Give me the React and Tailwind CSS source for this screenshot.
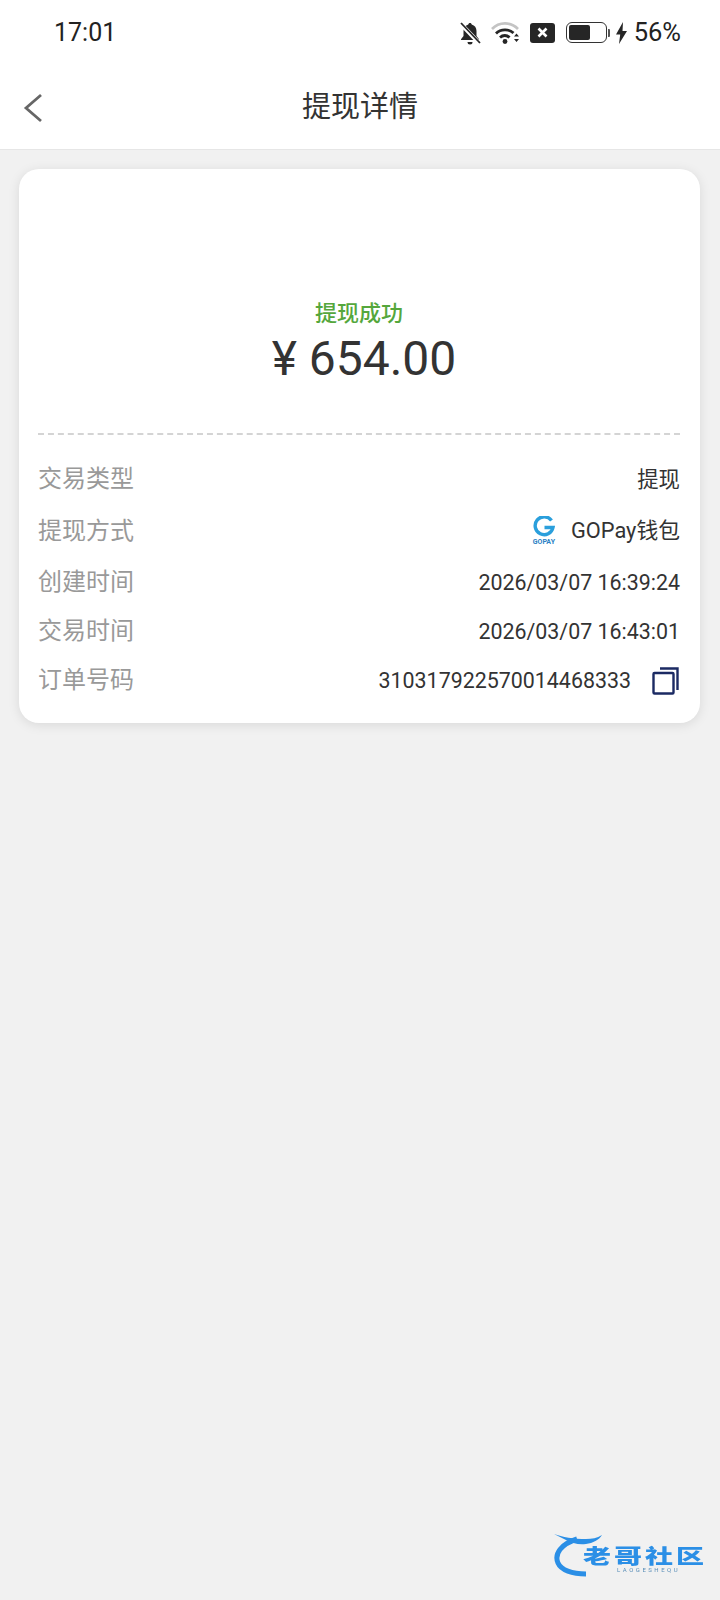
import React from 'react'

const rows = [
  { label: '交易类型', value: '提现' },
  { label: '提现方式', value: 'GOPay钱包', gopay: true },
  { label: '创建时间', value: '2026/03/07 16:39:24' },
  { label: '交易时间', value: '2026/03/07 16:43:01' },
  { label: '订单号码', value: '310317922570014468333', copy: true },
]

const rowHeights = ['h-[52px]', 'h-[52px]', 'h-[50px]', 'h-[48px]', 'h-[50px]']

function StatusBar() {
  return (
    <div className="flex h-[65px] items-center justify-between pl-[54px] pr-[39px] text-[#222]">
      <span className="text-[25px] leading-none">17:01</span>
      <div className="flex items-center">
        <svg width="22" height="24" viewBox="0 0 22 24" fill="#262626">
          <path d="M11 2c1 0 1.600.7 1.700 1.500 3 .8 4.800 3.300 4.800 6.500v5l2.500 3.200v.8H2v-.8L4.500 15v-5c0-3.200 1.800-5.700 4.800-6.500C9.400 2.700 10 2 11 2z" />
          <path d="M8.500 21h5a2.500 2.500 0 0 1-5 0z" />
          <path d="M1.500 2.500l19 20" stroke="#fff" strokeWidth="4" />
          <path d="M2 2l19 20" stroke="#262626" strokeWidth="1.800" />
        </svg>
        <svg className="ml-[10px]" width="30" height="24" viewBox="0 0 30 24" fill="none">
          <path d="M1 8C8 .5 20 .5 27 8" stroke="#c4c4c4" strokeWidth="2.600" />
          <path d="M5 12.500c4.800-4.800 13-4.800 17.500-.5" stroke="#262626" strokeWidth="2.800" />
          <path d="M9 16.500c2.800-2.700 7-2.700 9.500 0" stroke="#262626" strokeWidth="2.800" />
          <circle cx="14" cy="20.500" r="2.400" fill="#262626" />
          <path d="M23 15.500l2.500-3 2.500 3zM23 18l2.500 3 2.500-3z" fill="#262626" />
        </svg>
        <div className="ml-[9px] flex h-[20px] w-[25px] items-center justify-center rounded-[3px] bg-[#262626] text-white">
          <svg width="11" height="11" viewBox="0 0 11 11" stroke="#fff" strokeWidth="2.600">
            <path d="M1.500 1.500l8 8M9.500 1.500l-8 8" />
          </svg>
        </div>
        <div className="ml-[11px] flex h-[21px] w-[41px] items-center rounded-[6px] border-[1.5px] border-[#333] p-[2px]">
          <div className="h-full w-[21px] rounded-[2px] bg-[#262626]" />
        </div>
        <div className="ml-[1px] h-[8px] w-[2px] rounded-r-[1px] bg-[#555]" />
        <svg className="ml-[5px]" width="13" height="22" viewBox="0 0 13 22" fill="#262626">
          <path d="M8 0L1 12.500h4.200L4 22l8-13H7.500z" />
        </svg>
        <span className="ml-[6px] text-[25.500px] leading-none">56%</span>
      </div>
    </div>
  )
}

function GopayLogo() {
  return (
    <div className="flex w-[26px] flex-col items-center">
      <svg width="22" height="21" viewBox="0 0 22 21" fill="none">
        <path d="M18.500 4.500A9 9 0 1 0 20 11.500H11.500" stroke="#2a9fdc" strokeWidth="3.400" />
      </svg>
      <span className="mt-[2px] font-['Roboto',sans-serif] text-[7px] font-bold leading-none text-[#2b7fc4]">GOPAY</span>
    </div>
  )
}

function CopyIcon() {
  return (
    <svg className="ml-[21px] mr-[1px]" width="27" height="28" viewBox="0 0 27 28" fill="none" stroke="#1b2a63" strokeWidth="2.400">
      <rect x="1.500" y="6" width="20" height="20.500" rx="1" />
      <path d="M8 1.500h17.500v21.500" />
    </svg>
  )
}

function Watermark() {
  return (
    <div className="absolute left-[553px] top-[1528px] h-[50px] w-[158px] blur-[0.6px]">
      <svg className="absolute left-0 top-0" width="66" height="50" viewBox="0 0 66 50" fill="none">
        <path d="M24 11C8 16 1 26 5 35c3 7 14 11 28 11" stroke="#2b8fe6" strokeWidth="5" />
        <path d="M1 6c8 3 20 5 32 5 6 0 11-1 16-4-3 5-9 8-16 9-8 1-14-1-20-4" fill="#2b8fe6" />
      </svg>
      <span className="absolute left-[30px] top-[17px] origin-top-left scale-y-[0.72] whitespace-nowrap font-['Noto_Sans_CJK_SC',sans-serif] text-[28px] font-black leading-[28px] tracking-[3px] text-[#2b8fe6]">
        老哥社区
      </span>
      <span className="absolute left-[64px] top-[39px] whitespace-nowrap font-['Roboto',sans-serif] text-[6px] leading-none tracking-[2.500px] text-[#5b8fb8]">
        LAOGESHEQU
      </span>
    </div>
  )
}

export default function App() {
  return (
    <div className="relative h-[1600px] w-[720px] overflow-hidden bg-[#f1f1f1] font-['Roboto','Noto_Sans_CJK_SC',sans-serif]">
      <div className="border-b border-[#e6e6e6] bg-white">
        <StatusBar />
        <div className="relative flex h-[84px] items-center justify-center">
          <svg className="absolute left-[22px] top-[28px]" width="22" height="30" viewBox="0 0 22 30" fill="none" stroke="#666" strokeWidth="2.800">
            <path d="M19 2L4 15l15 13" />
          </svg>
          <span className="text-[29px] leading-none text-[#333]">提现详情</span>
        </div>
      </div>

      <div className="ml-[19px] mr-[20px] mt-[19px] h-[554px] rounded-[20px] bg-white pl-[19px] pr-[20px] shadow-[0_2px_12px_rgba(0,0,0,0.1)]">
        <div className="flex h-[214px] flex-col items-center justify-end">
          <span className="text-[22px] font-medium leading-none text-[#55a73c]">提现成功</span>
          <span className="ml-[10px] mt-[10px] text-[48px] leading-none text-[#333]">¥ 654.00</span>
        </div>
        <div className="mt-[50px] border-t-2 border-dashed border-[#d4d4d4]" />
        <div className="mt-[18px]">
          {rows.map((row, i) => (
            <div key={row.label} className={`flex items-center justify-between ${rowHeights[i]}`}>
              <span className="text-[24px] leading-none text-[#999]">{row.label}</span>
              <div className={row.gopay ? 'flex items-center text-[21.800px] leading-none text-[#333]' : 'mt-[2px] flex items-center text-[21.400px] leading-none text-[#333]'}>
                {row.gopay && <div className="mr-[14px]"><GopayLogo /></div>}
                <span>{row.value}</span>
                {row.copy && <CopyIcon />}
              </div>
            </div>
          ))}
        </div>
      </div>

      <Watermark />
    </div>
  )
}
